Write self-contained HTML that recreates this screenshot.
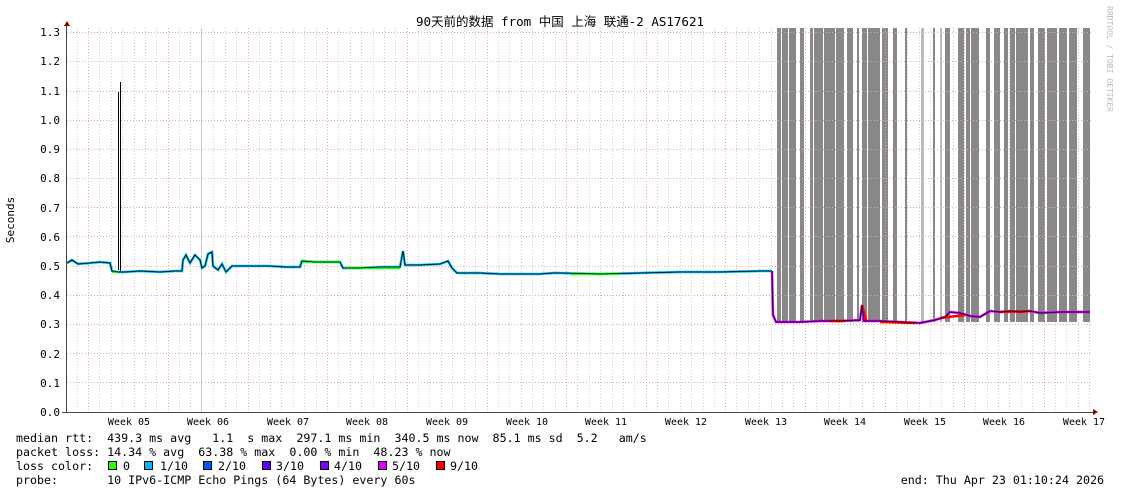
<!DOCTYPE html>
<html><head><meta charset="utf-8"><style>
html,body{margin:0;padding:0;background:#fff;width:1121px;height:494px;overflow:hidden}
text{font-family:"DejaVu Sans Mono","Liberation Mono","Noto Sans CJK SC",monospace;font-size:11.65px;fill:#000}
.s text{font-size:10px}
.y text{font-size:11px}
</style></head><body>
<svg width="1121" height="494" xmlns="http://www.w3.org/2000/svg">
<rect width="1121" height="494" fill="#fff"/>
<text x="560" y="26" text-anchor="middle" style="font-size:12.5px">90天前的数据 from 中国 上海 联通-2 AS17621</text>
<text x="0" y="0" transform="translate(1107,6) rotate(90)" style="font-size:8px;fill:#bbb">RRDTOOL / TOBI OETIKER</text>
<text x="0" y="0" transform="translate(14,220) rotate(-90)" text-anchor="middle" style="font-size:11px">Seconds</text>
<g stroke="#ccc" stroke-dasharray="1,2" stroke-width="1">
<path d="M77.5 28V412M99.5 28V412M111.5 28V412M122.5 28V412M134.5 28V412M145.5 28V412M156.5 28V412M179.5 28V412M190.5 28V412M213.5 28V412M225.5 28V412M236.5 28V412M259.5 28V412M270.5 28V412M281.5 28V412M293.5 28V412M304.5 28V412M316.5 28V412M338.5 28V412M350.5 28V412M361.5 28V412M373.5 28V412M384.5 28V412M395.5 28V412M418.5 28V412M429.5 28V412M441.5 28V412M452.5 28V412M464.5 28V412M475.5 28V412M498.5 28V412M509.5 28V412M521.5 28V412M532.5 28V412M543.5 28V412M555.5 28V412M577.5 28V412M589.5 28V412M600.5 28V412M612.5 28V412M623.5 28V412M634.5 28V412M657.5 28V412M668.5 28V412M680.5 28V412M691.5 28V412M703.5 28V412M714.5 28V412M736.5 28V412M748.5 28V412M759.5 28V412M771.5 28V412M782.5 28V412M793.5 28V412M816.5 28V412M828.5 28V412M839.5 28V412M850.5 28V412M862.5 28V412M873.5 28V412M896.5 28V412M907.5 28V412M919.5 28V412M930.5 28V412M941.5 28V412M953.5 28V412M975.5 28V412M987.5 28V412M998.5 28V412M1009.5 28V412M1021.5 28V412M1032.5 28V412M1055.5 28V412M1066.5 28V412M1078.5 28V412M1089.5 28V412"/>
</g>
<g fill="#888">
<rect x="777" y="28" width="4" height="294"/><rect x="782" y="28" width="6" height="294"/><rect x="789" y="28" width="7" height="294"/>
<rect x="800" y="28" width="4" height="294"/><rect x="810" y="28" width="3" height="294"/><rect x="814" y="28" width="9" height="294"/>
<rect x="824" y="28" width="11" height="294"/><rect x="836" y="28" width="8" height="294"/><rect x="847" y="28" width="6" height="294"/>
<rect x="857" y="28" width="2" height="294"/><rect x="862" y="28" width="5" height="294"/><rect x="868" y="28" width="12" height="294"/>
<rect x="882" y="28" width="6" height="294"/><rect x="893" y="28" width="4" height="294"/><rect x="905" y="28" width="2" height="294"/>
<rect x="933" y="28" width="2" height="294"/><rect x="945" y="28" width="5" height="294"/><rect x="958" y="28" width="6" height="294"/>
<rect x="966" y="28" width="4" height="294"/><rect x="971" y="28" width="8" height="294"/><rect x="986" y="28" width="4" height="294"/>
<rect x="994" y="28" width="6" height="294"/><rect x="1004" y="28" width="4" height="294"/><rect x="1010" y="28" width="5" height="294"/>
<rect x="1016" y="28" width="12" height="294"/><rect x="1030" y="28" width="4" height="294"/><rect x="1038" y="28" width="7" height="294"/>
<rect x="1047" y="28" width="10" height="294"/><rect x="1059" y="28" width="8" height="294"/><rect x="1069" y="28" width="8" height="294"/>
<rect x="1083" y="28" width="7" height="294"/>
</g>
<g fill="#bbb"><rect x="921" y="28" width="3" height="294"/><rect x="940" y="28" width="2" height="294"/></g>
<g stroke="#e8a8a8" stroke-dasharray="1,2">
<path d="M67 382.5H1093M67 353.5H1093M67 324.5H1093M67 295.5H1093M67 266.5H1093M67 236.5H1093M67 207.5H1093M67 178.5H1093M67 149.5H1093M67 120.5H1093M67 91.5H1093M67 61.5H1093M67 32.5H1093"/>
<path d="M88.5 28V412M168.5 28V412M248.5 28V412M327.5 28V412M407.5 28V412M487.5 28V412M566.5 28V412M646.5 28V412M725.5 28V412M805.5 28V412M885.5 28V412M964.5 28V412M1044.5 28V412"/>
</g>
<path d="M201.5 28V412" stroke="#ccc"/>
<g text-anchor="end" class="y">
<text x="60" y="416">0.0</text><text x="60" y="387">0.1</text><text x="60" y="358">0.2</text><text x="60" y="328">0.3</text>
<text x="60" y="299">0.4</text><text x="60" y="270">0.5</text><text x="60" y="241">0.6</text><text x="60" y="212">0.7</text>
<text x="60" y="182">0.8</text><text x="60" y="153">0.9</text><text x="60" y="124">1.0</text><text x="60" y="95">1.1</text>
<text x="60" y="65">1.2</text><text x="60" y="36">1.3</text>
</g>
<path d="M118.5 270 L118.5 92 M120.5 82 L120.5 272" stroke="#000" stroke-width="1" fill="none"/>
<path d="M67 263 L72 260 L78 264 L90 263 L100 262 L110 263 L112 271 L118 272 L125 272 L140 271 L160 272 L175 271 L182 271 L183 260 L186 255 L190 263 L195 255 L200 260 L202 268 L205 266 L208 254 L212 252 L213 266 L218 270 L222 264 L226 272 L232 266 L250 266 L270 266 L285 267 L300 267 L302 261 L315 262 L340 262 L343 268 L360 268 L380 267 L400 267 L403 251 L405 265 L420 265 L440 264 L448 261 L452 268 L457 273 L480 273 L500 274 L520 274 L540 274 L553 273 L560 273 L600 274 L640 273 L680 272 L720 272 L760 271 L772 271" stroke="#00b8f0" stroke-width="2.5" fill="none"/>
<path d="M112 272 L118 272 M300 262 L340 262 M345 268 L400 268 M570 274 L620 274" stroke="#2f2" stroke-width="2.5"/>
<path d="M67 263 L72 260 L78 264 L90 263 L100 262 L110 263 L112 271 L118 272 L125 272 L140 271 L160 272 L175 271 L182 271 L183 260 L186 255 L190 263 L195 255 L200 260 L202 268 L205 266 L208 254 L212 252 L213 266 L218 270 L222 264 L226 272 L232 266 L250 266 L270 266 L285 267 L300 267 L302 261 L315 262 L340 262 L343 268 L360 268 L380 267 L400 267 L403 251 L405 265 L420 265 L440 264 L448 261 L452 268 L457 273 L480 273 L500 274 L520 274 L540 274 L553 273 L560 273 L600 274 L640 273 L680 272 L720 272 L760 271 L772 271" stroke="#000" stroke-width="0.8" fill="none"/>
<path d="M772 271 L773 315 L776 322 L790 322 L800 322 L820 321 L840 321 L860 320 L862 305 L864 321 L880 321 L900 322 L920 323 L935 320 L945 317 L950 312 L960 313 L970 316 L980 317 L990 311 L1000 312 L1010 311 L1020 312 L1030 311 L1040 313 L1060 312 L1080 312 L1090 312" stroke="#d000ff" stroke-width="2.5" fill="none"/>
<path d="M830 321 L845 321 M862 305 L866 320 M880 322 L915 323 M940 318 L965 315 M1000 312 L1030 311" stroke="#f00" stroke-width="2.5" fill="none"/>
<path d="M772 271 L773 315 L776 322 L790 322 L800 322 L820 321 L840 321 L860 320 L862 305 L864 321 L880 321 L900 322 L920 323 L935 320 L945 317 L950 312 L960 313 L970 316 L980 317 L990 311 L1000 312 L1010 311 L1020 312 L1030 311 L1040 313 L1060 312 L1080 312 L1090 312" stroke="#000" stroke-width="0.8" fill="none"/>
<path d="M66.5 24V412M62 412.5H1096" stroke="#444"/>
<path d="M64 26L67 21L70 26Z M1093 409L1098 412L1093 415Z" fill="#800"/>
<g text-anchor="middle" class="s">
<text x="129" y="425">Week 05</text><text x="208" y="425">Week 06</text><text x="288" y="425">Week 07</text>
<text x="367" y="425">Week 08</text><text x="447" y="425">Week 09</text><text x="527" y="425">Week 10</text>
<text x="606" y="425">Week 11</text><text x="686" y="425">Week 12</text><text x="766" y="425">Week 13</text>
<text x="845" y="425">Week 14</text><text x="925" y="425">Week 15</text><text x="1004" y="425">Week 16</text>
<text x="1084" y="425">Week 17</text>
</g>
<text x="16" y="442" xml:space="preserve">median rtt:  439.3 ms avg   1.1  s max  297.1 ms min  340.5 ms now  85.1 ms sd  5.2   am/s</text>
<text x="16" y="456" xml:space="preserve">packet loss: 14.34 % avg  63.38 % max  0.00 % min  48.23 % now</text>
<text x="16" y="470" xml:space="preserve">loss color:</text>
<g stroke="#000">
<rect x="108.5" y="461.5" width="8" height="8" fill="#26ff00"/>
<rect x="144.5" y="461.5" width="8" height="8" fill="#00b8ff"/>
<rect x="203.5" y="461.5" width="8" height="8" fill="#0059ff"/>
<rect x="262.5" y="461.5" width="8" height="8" fill="#5e00ff"/>
<rect x="320.5" y="461.5" width="8" height="8" fill="#7e00ff"/>
<rect x="378.5" y="461.5" width="8" height="8" fill="#dd00ff"/>
<rect x="436.5" y="461.5" width="8" height="8" fill="#ff0000"/>
</g>
<text x="123" y="470">0</text><text x="160" y="470">1/10</text><text x="218" y="470">2/10</text><text x="276" y="470">3/10</text>
<text x="334" y="470">4/10</text><text x="392" y="470">5/10</text><text x="450" y="470">9/10</text>
<text x="16" y="484" xml:space="preserve">probe:       10 IPv6-ICMP Echo Pings (64 Bytes) every 60s</text>
<text x="1104" y="484" text-anchor="end">end: Thu Apr 23 01:10:24 2026</text>
</svg>
</body></html>
